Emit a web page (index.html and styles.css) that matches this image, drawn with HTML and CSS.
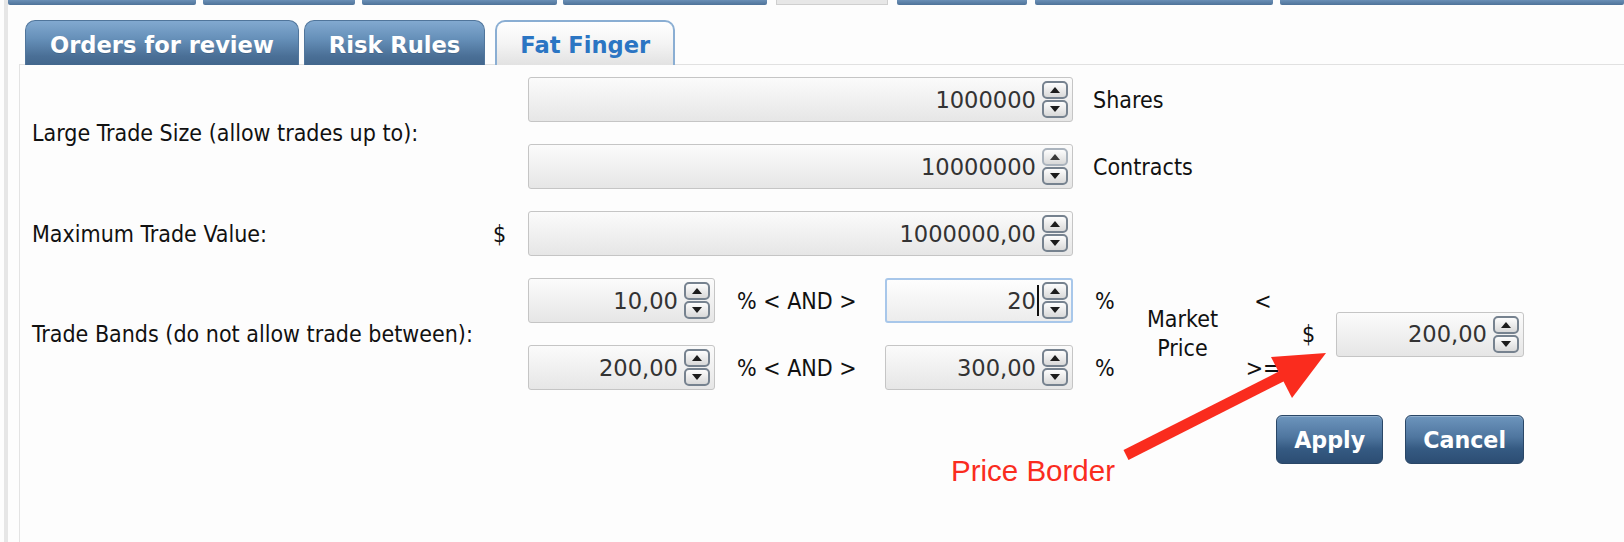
FILE: index.html
```html
<!DOCTYPE html>
<html lang="en">
<head>
<meta charset="utf-8">
<title>Fat Finger</title>
<link rel="stylesheet" href="styles.css">
</head>
<body>
<div class="page">
  <div class="frame">
    <div class="strip">
      <span class="s1"></span><span class="s2"></span><span class="s3"></span><span class="s4"></span><span class="lt"></span><span class="s5"></span><span class="s6"></span><span class="s7"></span>
    </div>
    <div class="tabs">
      <div class="tab">Orders for review</div>
      <div class="tab">Risk Rules</div>
      <div class="tab active">Fat Finger</div>
    </div>
    <div class="panel">
      <div class="group">
        <div class="label">Large Trade Size (allow trades up to):</div>
        <div class="cur"></div>
        <div class="fields">
          <div class="frow">
            <div class="spin w545"><span class="val">1000000</span><span class="sb"><i class="up"></i><i class="dn"></i></span></div>
            <span class="unit">Shares</span>
          </div>
          <div class="frow">
            <div class="spin w545"><span class="val">10000000</span><span class="sb"><i class="up dis"></i><i class="dn"></i></span></div>
            <span class="unit">Contracts</span>
          </div>
        </div>
      </div>
      <div class="group">
        <div class="label">Maximum Trade Value:</div>
        <div class="cur">$</div>
        <div class="fields">
          <div class="frow">
            <div class="spin w545"><span class="val">1000000,00</span><span class="sb"><i class="up"></i><i class="dn"></i></span></div>
          </div>
        </div>
      </div>
      <div class="group">
        <div class="label">Trade Bands (do not allow trade between):</div>
        <div class="cur"></div>
        <div class="fields">
          <div class="frow">
            <div class="spin w187"><span class="val">10,00</span><span class="sb"><i class="up"></i><i class="dn"></i></span></div>
            <span class="and">% &lt; AND &gt;</span>
            <div class="spin w188 focus"><span class="val">20</span><span class="caret"></span><span class="sb"><i class="up"></i><i class="dn"></i></span></div>
            <span class="pct">%</span>
          </div>
          <div class="frow">
            <div class="spin w187"><span class="val">200,00</span><span class="sb"><i class="up"></i><i class="dn"></i></span></div>
            <span class="and">% &lt; AND &gt;</span>
            <div class="spin w188"><span class="val">300,00</span><span class="sb"><i class="up"></i><i class="dn"></i></span></div>
            <span class="pct">%</span>
          </div>
        </div>
        <div class="market">
          <div class="mp">Market<br>Price</div>
          <div class="cmp"><span>&lt;</span><span>&gt;=</span></div>
          <div class="dl">$</div>
          <div class="spin w188"><span class="val">200,00</span><span class="sb"><i class="up"></i><i class="dn"></i></span></div>
        </div>
      </div>
      <div class="actions">
        <button class="btn">Apply</button>
        <button class="btn">Cancel</button>
      </div>
    </div>
  </div>
  <div class="note">
    <svg class="arrow" width="240" height="130" viewBox="0 0 240 130">
      <line x1="26" y1="115" x2="186" y2="34" stroke="#fa2c1e" stroke-width="11"/>
      <polygon points="226,13 171,17 192,58" fill="#fa2c1e"/>
    </svg>
    <div class="note-text">Price Border</div>
  </div>
</div>
</body>
</html>
```

FILE: styles.css
```css
* { box-sizing: border-box; }
html, body { margin: 0; padding: 0; background: #fdfdfd; }
body { width: 1624px; height: 542px; overflow: hidden; }

.page { position: relative; height: 542px; padding-left: 4px; }
.frame { height: 100%; border-left: 4px solid #e6e6e6; display: flex; flex-direction: column; }

/* top strip (bottoms of outer tabs) */
.strip { display: flex; height: 5px; }
.strip span { height: 5px; background: linear-gradient(#6a8fb6, #4f7399); border-radius: 0 0 2px 2px; }
.strip .lt { width: 112px; margin-left: 9px; background: #e7e7e7; border: 1px solid #cfcfcf; border-top: none; border-radius: 0; }
.s1 { width: 188px; }
.s2 { width: 152px; margin-left: 7px; }
.s3 { width: 195px; margin-left: 7px; }
.s4 { width: 204px; margin-left: 6px; }
.s5 { width: 130px; margin-left: 9px; }
.s6 { width: 238px; margin-left: 8px; }
.strip .s7 { flex: 1; margin-left: 7px; }

/* tabs */
.tabs { display: flex; align-items: flex-end; height: 45px; margin: 15px 0 -1px 17px; position: relative; z-index: 1; }
.tab {
  height: 45px; padding: 3px 24px 0; display: flex; align-items: center;
  font-family: "DejaVu Sans", Verdana, sans-serif; font-weight: bold; font-size: 22.6px; color: #fff;
  border: 1px solid #50759b; border-bottom: none; border-radius: 10px 10px 0 0;
  background: linear-gradient(#82a9d0 0%, #6690b9 40%, #4a6f96 80%, #43678d 100%);
  text-shadow: 0 1px 0 rgba(0,0,0,0.15);
}
.tab + .tab { margin-left: 5px; }
.tab.active {
  margin-left: 10px; padding: 3px 23px 0; color: #2b75c3; text-shadow: none;
  border: 2px solid #8aaed3; border-bottom: none;
  background: linear-gradient(#ffffff 0%, #f4f4f4 50%, #e2e2e2 100%);
}

/* panel */
.panel { flex: 1; margin-left: 11px; border-top: 1px solid #e1e1e1; border-left: 1px solid #e3e3e3; padding: 12px 0 0 12px; background: #fdfdfd; }

.label, .cur, .unit, .and, .pct, .mp, .cmp, .dl {
  font-family: "DejaVu Sans Condensed", "Liberation Sans", Arial, sans-serif;
  font-size: 23px; color: #111;
}

.group { display: flex; align-items: center; }
.group + .group { margin-top: 22px; }
.label { width: 461px; }
.cur { width: 35px; }
.fields { display: flex; flex-direction: column; gap: 22px; }
.frow { display: flex; align-items: center; }
.unit { margin-left: 20px; }
.and { width: 170px; padding-left: 22px; }
.pct { width: 52px; padding-left: 22px; }

.market { display: flex; align-items: center; }
.mp { width: 115px; text-align: center; line-height: 29px; }
.cmp { width: 46px; display: flex; flex-direction: column; gap: 22px; }
.cmp span { height: 45px; display: flex; align-items: center; justify-content: center; }
.dl { width: 50px; padding-left: 16px; }

/* spinner */
.spin {
  height: 45px; display: flex; align-items: center; justify-content: flex-end;
  border: 1px solid #c5c5c5; border-radius: 3px; padding-right: 4px;
  background: linear-gradient(#fbfbfb, #e6e6e6);
}
.w545 { width: 545px; }
.w187 { width: 187px; }
.w188 { width: 188px; }
.spin.focus { border: 2px solid #a8c7ea; padding-right: 3px; background: linear-gradient(#fefefe, #ececec); }
.val { font-family: "DejaVu Sans", Verdana, sans-serif; font-size: 22.6px; color: #333; margin-right: 6px; }
.focus .val { margin-right: 1px; }
.caret { width: 2px; height: 31px; background: #111; margin-right: 3px; }

.sb { display: flex; flex-direction: column; gap: 1px; }
.sb i {
  width: 26px; height: 18px; display: flex; align-items: center; justify-content: center;
  border: 2px solid #76828f; border-radius: 5px;
  background: linear-gradient(#fdfdfd, #d9d9d9);
}
.sb i.up::before { content: ""; border-left: 5px solid transparent; border-right: 5px solid transparent; border-bottom: 6px solid #1c1c1c; }
.sb i.dn::before { content: ""; border-left: 5px solid transparent; border-right: 5px solid transparent; border-top: 6px solid #1c1c1c; }
.sb i.dis { border-color: #aab3bd; }
.sb i.dis::before { border-bottom-color: #3a3a3a; }

/* buttons */
.actions { display: flex; justify-content: flex-end; gap: 22px; margin-top: 25px; width: 1492px; }
.btn {
  height: 49px; padding: 0 17px; margin: 0;
  font-family: "DejaVu Sans", Verdana, sans-serif; font-weight: bold; font-size: 22.2px; color: #fff;
  border: 1px solid #2a4767; border-radius: 6px;
  background: linear-gradient(#6d95bd 0%, #4f769f 45%, #355a82 70%, #2c4d73 100%);
  box-shadow: inset 0 1px 0 rgba(255,255,255,0.25);
}

/* annotation overlay */
.note { position: absolute; left: 0; top: 0; width: 0; height: 0; }
.arrow { position: absolute; left: 1100px; top: 340px; }
.note-text {
  position: absolute; left: 951px; top: 456px; white-space: nowrap;
  font-family: "Liberation Sans", Arial, sans-serif; font-size: 29.5px; line-height: 29px; color: #fa2c1e;
}
```
